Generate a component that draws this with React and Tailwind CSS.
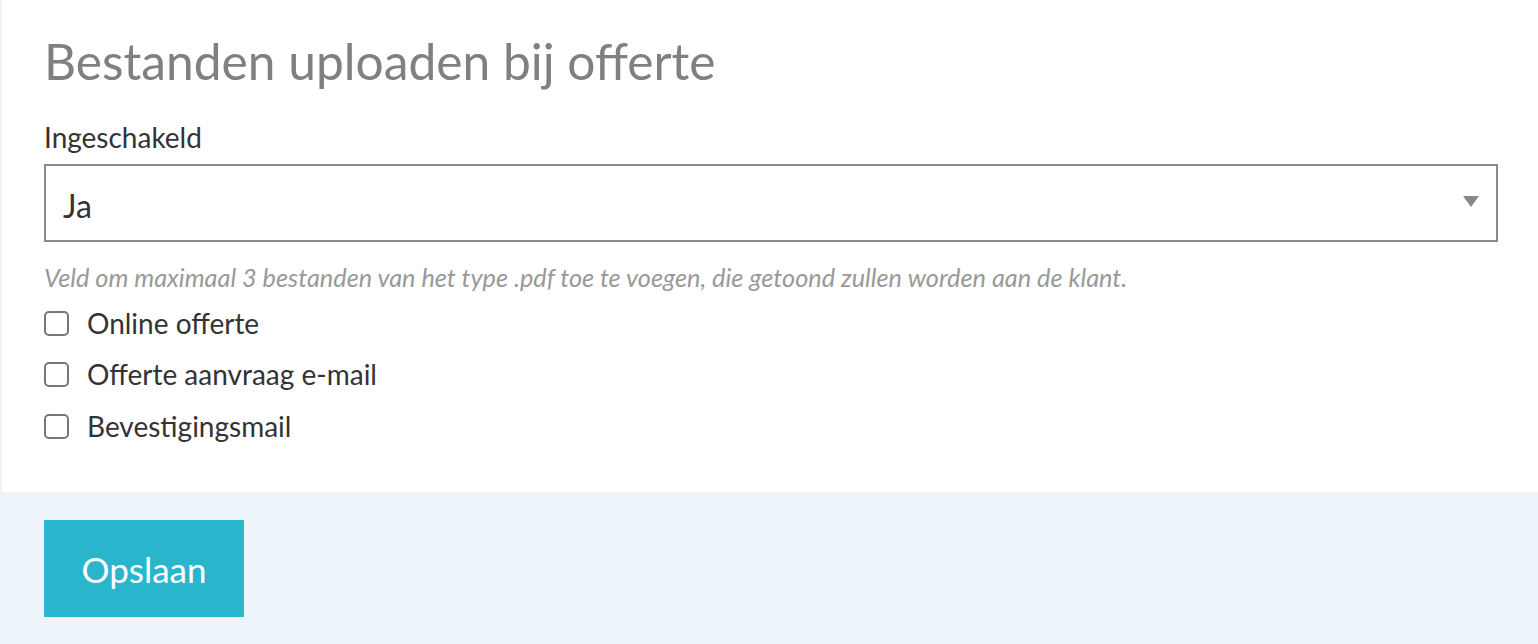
import React, { useState } from 'react';

const options = [
    { id: 'online', label: 'Online offerte' },
    { id: 'request', label: 'Offerte aanvraag e-mail' },
    { id: 'confirm', label: 'Bevestigingsmail' },
];

export default function App() {
    const [enabled, setEnabled] = useState('ja');
    const [checked, setChecked] = useState({});

    const toggle = (id) => setChecked(c => ({ ...c, [id]: !c[id] }));

    return (
        <div className="w-full h-[644px] bg-[#f2f2f2] pl-[2px] flex flex-col font-['Lato','Liberation_Sans',sans-serif]">
            <div className="bg-white pl-[42px] pr-[40px] pt-[32px] pb-[49px]">
                <h1 className="text-[49.7px] leading-[1.2] text-[#808080] font-normal">Bestanden uploaden bij offerte</h1>

                <label className="block mt-[29px] text-[28px] leading-[1.2] text-[#333]">Ingeschakeld</label>
                <div className="relative mt-[10px]">
                    <select
                        value={enabled}
                        onChange={e => setEnabled(e.target.value)}
                        className="appearance-none w-full h-[78px] border-2 border-[#8a8a8a] bg-white pl-[17px] pr-[50px] pt-[6px] text-[32px] text-[#333] outline-none rounded-none"
                    >
                        <option value="ja">Ja</option>
                        <option value="nee">Nee</option>
                    </select>
                    <svg className="absolute right-[19px] top-[32px] pointer-events-none" width="16" height="11" viewBox="0 0 16 11">
                        <path d="M0 0H16L8 11Z" fill="#888" />
                    </svg>
                </div>

                <p className="mt-[20px] text-[25.3px] leading-[1.2] italic text-[#999]">
                    Veld om maximaal 3 bestanden van het type .pdf toe te voegen, die getoond zullen worden aan de klant.
                </p>

                <div className="mt-[14px] flex flex-col gap-[18px]">
                    {options.map(o => (
                        <label key={o.id} className="flex items-center gap-[18px] text-[28px] leading-[1.2] text-[#333] cursor-pointer">
                            <span
                                onClick={() => toggle(o.id)}
                                className={`w-[25px] h-[25px] rounded-[5px] border-2 border-[#777] flex items-center justify-center ${checked[o.id] ? 'bg-[#29b6cd] border-[#29b6cd]' : 'bg-white'}`}
                            />
                            {o.label}
                        </label>
                    ))}
                </div>
            </div>

            <div className="flex-1 bg-[#edf5fb] px-[42px] pt-[28px]">
                <button className="w-[200px] h-[97px] bg-[#29b6cd] text-white text-[35px]">Opslaan</button>
            </div>
        </div>
    );
}
